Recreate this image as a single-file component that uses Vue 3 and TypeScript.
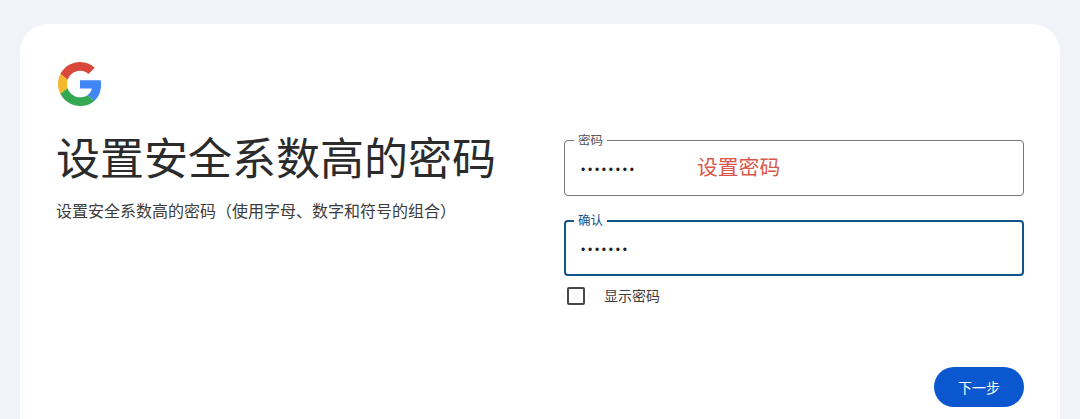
<script setup lang="ts">
const title = '设置安全系数高的密码'
const subtitle = '设置安全系数高的密码（使用字母、数字和符号的组合）'
</script>

<template>
  <main class="page">
    <section class="card">
      <svg class="logo" viewBox="0 0 48 48" aria-label="Google">
        <path fill="#D9483B" d="M24 9.5c3.54 0 6.71 1.22 9.21 3.6l6.85-6.85C35.9 2.38 30.47 0 24 0 14.62 0 6.51 5.38 2.56 13.22l7.98 6.19C12.43 13.72 17.74 9.5 24 9.5z" />
        <path fill="#4285F4" d="M46.98 24.55c0-1.57-.15-3.09-.38-4.55H24v9.02h12.94c-.58 2.96-2.26 5.48-4.78 7.18l7.73 6c4.51-4.18 7.09-10.36 7.09-17.65z" />
        <path fill="#F4B82E" d="M10.53 28.59c-.48-1.45-.76-2.99-.76-4.59s.27-3.14.76-4.59l-7.98-6.19C.92 16.46 0 20.12 0 24c0 3.88.92 7.54 2.56 10.78l7.97-6.19z" />
        <path fill="#34A853" d="M24 48c6.48 0 11.93-2.13 15.89-5.81l-7.73-6c-2.15 1.45-4.92 2.3-8.16 2.3-6.26 0-11.57-4.22-13.47-9.91l-7.98 6.19C6.51 42.62 14.62 48 24 48z" />
      </svg>

      <div class="columns">
        <div class="intro">
          <h1>{{ title }}</h1>
          <p>{{ subtitle }}</p>
        </div>

        <div class="form">
          <div class="field">
            <span class="label">密码</span>
            <span class="dots">••••••••</span>
            <span class="note">设置密码</span>
          </div>
          <div class="field focused">
            <span class="label">确认</span>
            <span class="dots">•••••••</span>
          </div>
          <label class="show">
            <span class="box"></span>
            <span class="show-text">显示密码</span>
          </label>
          <div class="actions">
            <button type="button" class="next">下一步</button>
          </div>
        </div>
      </div>
    </section>
  </main>
</template>

<style>
html, body { margin: 0; background: #f0f4f9; overflow: hidden; }
</style>

<style scoped>
.page {
  box-sizing: border-box;
  height: 419px;
  padding: 24px 20px 0;
  background: #f0f4f9;
  font-family: "Noto Sans CJK SC", "Noto Sans", sans-serif;
  color: #1f1f1f;
}
.card {
  box-sizing: border-box;
  height: 395px;
  padding: 38px 36px 0;
  background: #fff;
  border-radius: 28px 28px 0 0;
}
.logo { display: block; width: 44px; height: 44px; margin-left: 2px; }
.columns {
  display: grid;
  grid-template-columns: 508px 460px;
  margin-top: 24px;
}
h1 {
  margin: 0;
  font-size: 44px;
  font-weight: 400;
  line-height: 52px;
  letter-spacing: 0;
  color: #2b2b2b;
}
.intro p {
  margin: 16px 0 0;
  font-size: 16px;
  font-weight: 400;
  line-height: 24px;
  color: #3c3c3c;
}
.form { display: flex; flex-direction: column; padding-top: 10px; }
.field {
  position: relative;
  box-sizing: border-box;
  display: flex;
  align-items: center;
  height: 56px;
  padding: 4px 16px 0;
  border: 1px solid #747775;
  border-radius: 4px;
}
.field.focused {
  margin-top: 24px;
  padding: 4px 15px 0;
  border: 2px solid #14548a;
}
.label {
  position: absolute;
  top: -9px;
  left: 9px;
  padding: 0 4px;
  background: #fff;
  font-size: 12.5px;
  font-weight: 400;
  line-height: 16px;
  color: #555;
}
.focused .label { top: -10px; left: 8px; color: #14548a; }
.dots {
  font-family: "Liberation Sans", sans-serif;
  font-size: 12px;
  letter-spacing: 2.75px;
  line-height: 16px;
  color: #1f1f1f;
}
.note {
  position: absolute;
  left: 132px;
  top: 10px;
  font-size: 20.8px;
  font-weight: 400;
  line-height: 30px;
  color: #d9584e;
}
.show {
  display: flex;
  align-items: center;
  gap: 19px;
  margin-top: 10px;
  padding-left: 3px;
  font-size: 14px;
  font-weight: 400;
  line-height: 20px;
  color: #3c3c3c;
}
.show-text { line-height: 18px; padding-bottom: 2px; }
.box {
  box-sizing: border-box;
  width: 18px;
  height: 18px;
  border: 2px solid #444746;
  border-radius: 2px;
}
.actions {
  display: flex;
  justify-content: flex-end;
  margin-top: 61px;
}
.next {
  width: 90px;
  height: 40px;
  padding: 0;
  border: 0;
  border-radius: 20px;
  background: #0b57d0;
  color: #fff;
  font-family: inherit;
  font-size: 14px;
  font-weight: 400;
}
</style>
